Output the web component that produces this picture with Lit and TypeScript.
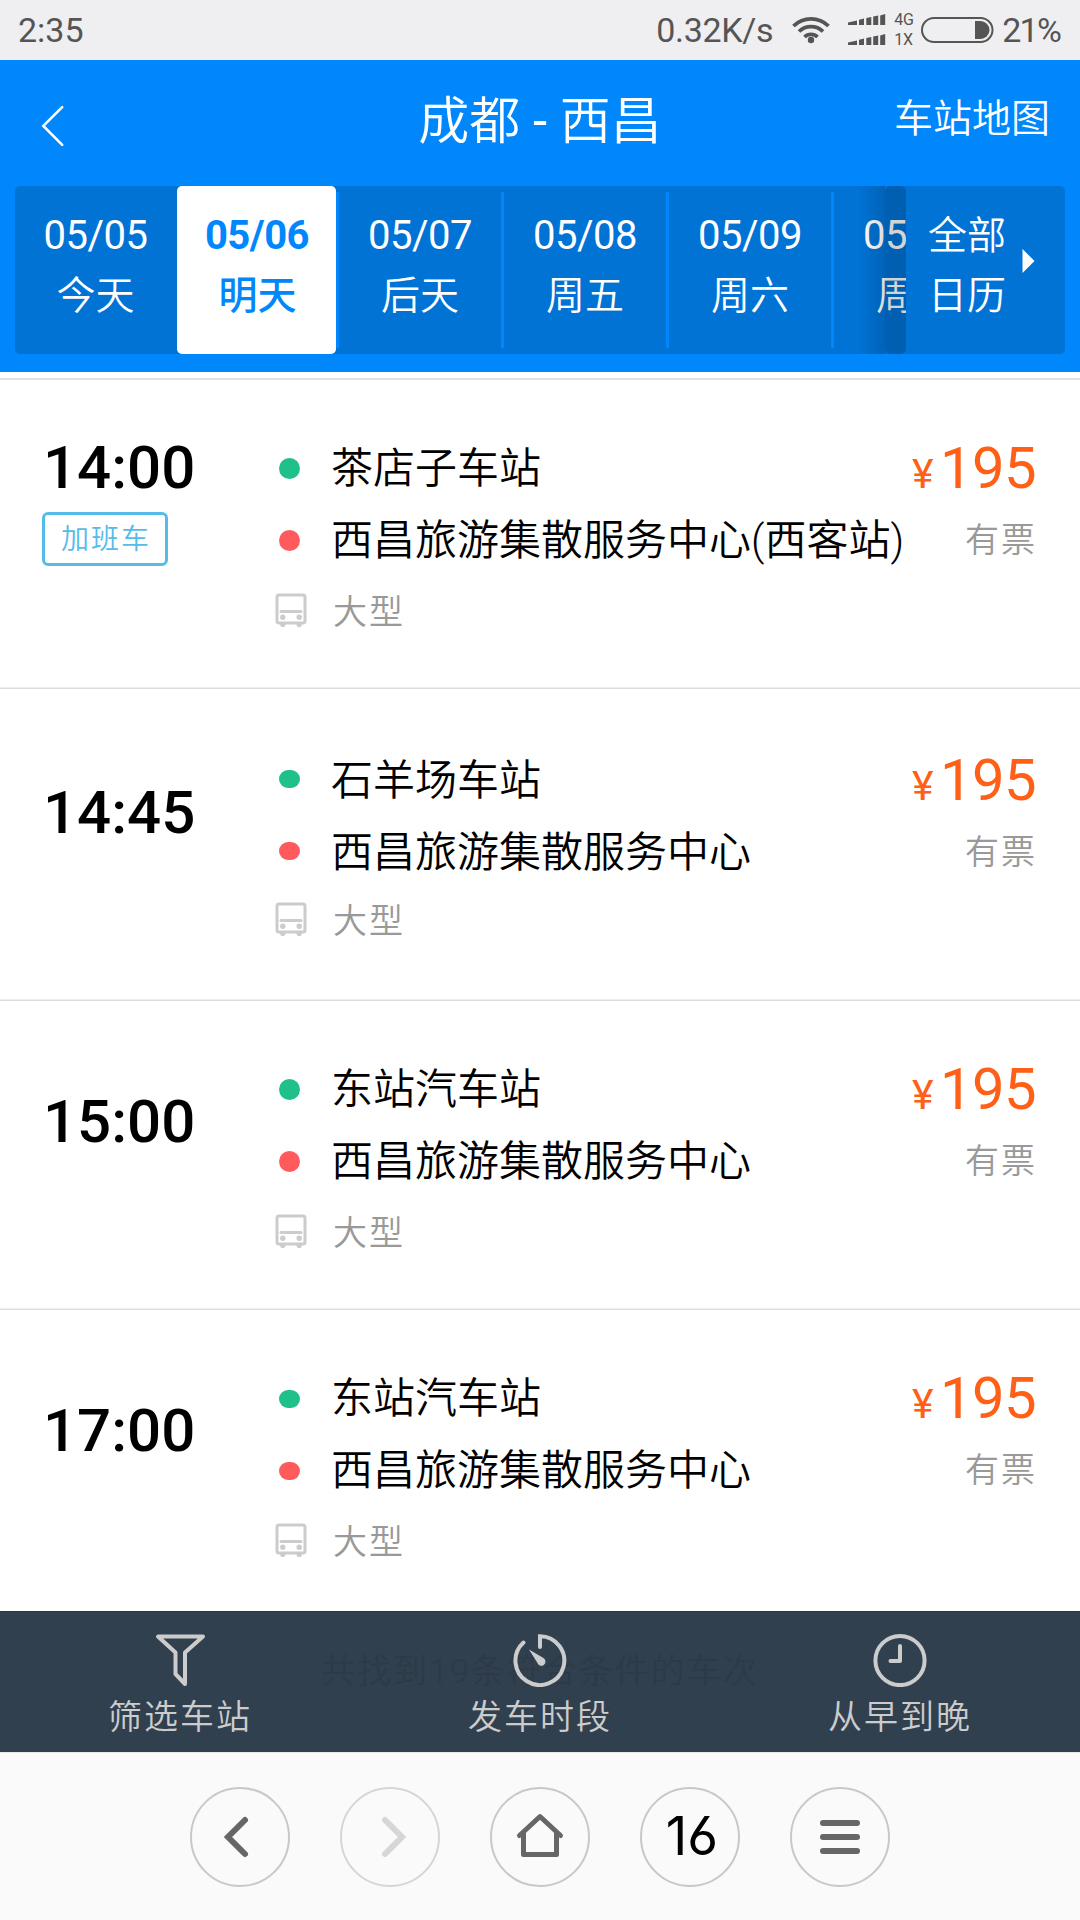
import { LitElement, html, css, svg, nothing } from "lit";
import { customElement, property } from "lit/decorators.js";
import { classMap } from "lit/directives/class-map.js";

interface Day {
  date: string;
  label: string;
  active?: boolean;
}

interface Trip {
  time: string;
  tag?: string;
  from: string;
  to: string;
  vehicle: string;
  price: string;
  stock: string;
  tall?: boolean;
  flatDots?: boolean;
}

const DAYS: Day[] = [
  { date: "05/05", label: "今天" },
  { date: "05/06", label: "明天", active: true },
  { date: "05/07", label: "后天" },
  { date: "05/08", label: "周五" },
  { date: "05/09", label: "周六" },
  { date: "05/10", label: "周日" },
];

const TRIPS: Trip[] = [
  { time: "14:00", tag: "加班车", from: "茶店子车站", to: "西昌旅游集散服务中心(西客站)", vehicle: "大型", price: "195", stock: "有票" },
  { time: "14:45", from: "石羊场车站", to: "西昌旅游集散服务中心", vehicle: "大型", price: "195", stock: "有票", tall: true, flatDots: true },
  { time: "15:00", from: "东站汽车站", to: "西昌旅游集散服务中心", vehicle: "大型", price: "195", stock: "有票" },
  { time: "17:00", from: "东站汽车站", to: "西昌旅游集散服务中心", vehicle: "大型", price: "195", stock: "有票", flatDots: true },
];

const shared = css`
  *, *::before, *::after { box-sizing: border-box; }
  :host {
    display: block;
    font-family: Roboto, "Noto Sans CJK SC", sans-serif;
    font-weight: 400;
  }
  svg { display: block; flex: none; }
`;

@customElement("status-bar")
class StatusBar extends LitElement {
  static styles = [shared, css`
    .bar { display: flex; align-items: center; height: 60px; padding: 0 20px 0 18px; background: #efeff1; color: #555; font-size: 34px; line-height: 60px; }
    .speed { margin-left: auto; margin-right: 19px; letter-spacing: -0.3px; }
    .signals { margin-left: 18px; }
    .net { margin: 0 5px 0 8px; width: 22px; font-size: 16px; line-height: 20px; letter-spacing: -0.3px; }
    .pct { margin-left: 8px; letter-spacing: -1.8px; }
  `];

  render() {
    const bars = (y: number) => svg`
      <path d="M0 ${y + 11}v-2.4l9 -2.2v4.6z M11 ${y + 11}v-5.2l5 -1.3v6.5z M18.3 ${y + 11}v-7l5 -1v8z M25.2 ${y + 11}v-8.4l5 -1.2v9.6z M32.2 ${y + 11}v-9.6l5 -1.4v11z"/>`;
    return html`
      <div class="bar">
        <span>2:35</span>
        <span class="speed">0.32K/s</span>
        <svg width="38" height="60" viewBox="0 0 38 60" fill="none" stroke="#555" stroke-width="3.8">
          <path d="M1.5 26a25 25 0 0 1 35 0"/>
          <path d="M7 31.5a17.3 17.3 0 0 1 24 0"/>
          <path d="M12.5 37a9.4 9.4 0 0 1 13 0"/>
          <circle cx="19" cy="40" r="3.2" fill="#555" stroke="none"/>
        </svg>
        <svg class="signals" width="38" height="60" viewBox="0 0 38 60" fill="#555">${bars(14)}${bars(34)}</svg>
        <div class="net"><div>4G</div><div>1X</div></div>
        <svg width="73" height="60" viewBox="0 0 73 60">
          <rect x="1" y="18" width="70.5" height="24" rx="12" fill="none" stroke="#555" stroke-width="2"/>
          <path d="M54 21h5.5a9 9 0 0 1 0 18H54z" fill="#555"/>
        </svg>
        <span class="pct">21%</span>
      </div>`;
  }
}

@customElement("date-strip")
class DateStrip extends LitElement {
  @property({ attribute: false }) days: Day[] = [];

  static styles = [shared, css`
    .strip { position: relative; display: flex; height: 168px; margin: 0 15px; border-radius: 5px; background: #0073d5; overflow: hidden; color: #fff; }
    .days { display: flex; width: 891px; overflow: hidden; }
    .day { flex: none; display: flex; flex-direction: column; align-items: center; width: 165px; padding: 20px 0 0 3px; position: relative; text-align: center; }
    .day:first-child { width: 162px; padding-left: 0; padding-right: 1px; }
    .day::before { content: ""; position: absolute; left: 0; top: 6px; bottom: 6px; width: 3px; background: #0087fb; }
    .day:first-child::before, .active::before { display: none; }
    .day.active { width: 159px; padding-left: 1px; border-radius: 5px; background: #fff; color: #0087fb; font-weight: 700; }
    .active .label { font-weight: 500; padding-left: 1px; }
    .date { font-size: 40px; line-height: 60px; letter-spacing: -0.5px; }
    .label { font-size: 39px; line-height: 60px; font-weight: 350; }
    .shade { position: absolute; right: 159px; top: 0; width: 48px; height: 168px; display: flex; }
    .fade { width: 27px; background: linear-gradient(to right, rgba(0,0,0,0), rgba(0,0,0,.14)); }
    .edge { width: 21px; border-radius: 5px; background: rgba(0,0,0,.17); }
    .all { display: flex; flex: 1; align-items: flex-start; padding: 20px 0 0 22px; font-size: 39px; line-height: 60px; font-weight: 350; }
    .arrow { margin: 43px 0 0 16px; }
  `];

  render() {
    return html`
      <div class="strip">
        <div class="days">
          ${this.days.map((d) => html`
            <div class=${classMap({ day: true, active: !!d.active })}>
              <div class="date">${d.date}</div>
              <div class="label">${d.label}</div>
            </div>`)}
        </div>
        <div class="shade"><div class="fade"></div><div class="edge"></div></div>
        <div class="all">
          <div><div>全部</div><div>日历</div></div>
          <svg class="arrow" width="13" height="24" viewBox="0 0 13 24"><path d="M0.5 0L12.5 12L0.5 24z" fill="#fff"/></svg>
        </div>
      </div>`;
  }
}

@customElement("trip-row")
class TripRow extends LitElement {
  @property({ attribute: false }) trip!: Trip;

  static styles = [shared, css`
    .row { display: flex; height: 309px; padding: 52px 44px 0 42px; border-bottom: 1px solid #dcdcdc; box-shadow: inset 0 -1px #efefef; color: #000; }
    .tall { height: 312px; padding-top: 55px; }
    .flat .dot { height: 18px; margin-top: 2px; }
    .tall .dot { margin-top: -2px; }
    .tall .vehicle { height: 64px; }
    .when { display: flex; flex-direction: column; align-items: flex-start; justify-content: center; width: 233px; height: 138px; }
    .tagged { justify-content: flex-start; height: auto; }
    .time { font-size: 60px; line-height: 72px; font-weight: 500; padding-left: 1px; }
    .tag { margin-top: 8px; width: 126px; height: 54px; border: 3px solid #55bcea; border-radius: 6px; color: #55bcea; font-size: 28px; line-height: 50px; text-align: center; letter-spacing: 2px; padding-left: 2px; font-weight: 350; }
    .route { flex: 1; }
    .stop { display: flex; align-items: center; height: 72px; font-size: 42px; line-height: 74px; white-space: nowrap; }
    .dot { width: 21px; height: 21px; margin: 0 31px 0 4px; border-radius: 10.5px; background: #1fc08a; }
    .dot.end { background: #ff5a5c; }
    .name { font-weight: 350; padding-top: 2px; }
    .vehicle { display: flex; align-items: center; height: 70px; color: #999; font-size: 34px; letter-spacing: 2px; line-height: 74px; font-weight: 350; }
    .vehicle svg { margin-right: 26px; }
    .vehicle span { padding-top: 1px; }
    .fare { display: flex; flex-direction: column; align-items: flex-end; }
    .price { display: flex; align-items: baseline; height: 72px; color: #ff5f16; font-size: 58px; line-height: 72px; letter-spacing: -0.6px; }
    .yen { font-size: 41px; margin-right: 7px; }
    .stock { margin-right: -1px; color: #999; font-size: 34px; letter-spacing: 2px; line-height: 72px; font-weight: 350; }
  `];

  render() {
    const t = this.trip;
    return html`
      <div class=${classMap({ row: true, tall: !!t.tall, flat: !!t.flatDots })}>
        <div class=${classMap({ when: true, tagged: !!t.tag })}>
          <div class="time">${t.time}</div>
          ${t.tag ? html`<div class="tag">${t.tag}</div>` : nothing}
        </div>
        <div class="route">
          <div class="stop"><i class="dot"></i><span class="name">${t.from}</span></div>
          <div class="stop"><i class="dot end"></i><span class="name">${t.to}</span></div>
          <div class="vehicle">
            <svg width="32" height="36" viewBox="0 0 32 36">
              <rect x="2" y="2" width="28" height="28" rx="2" fill="none" stroke="#ccc" stroke-width="3"/>
              <path d="M6 18.5h20" stroke="#ccc" stroke-width="3" stroke-linecap="round"/>
              <g fill="#ccc"><circle cx="7.8" cy="24.3" r="2.7"/><circle cx="24.2" cy="24.3" r="2.7"/><circle cx="7.8" cy="31.5" r="2.6"/><circle cx="24.2" cy="31.5" r="2.6"/></g>
            </svg>
            <span>${t.vehicle}</span>
          </div>
        </div>
        <div class="fare">
          <div class="price"><span class="yen">¥</span><span>${t.price}</span></div>
          <div class="stock">${t.stock}</div>
        </div>
      </div>`;
  }
}

const ICONS = {
  filter: svg`<path d="M5 3.5H50L32 19.5V51L22.5 41V19.5Z" stroke-linejoin="round"/>`,
  timer: svg`<path d="M27 14V3.2A24.4 24.4 0 1 1 10.5 9.5" stroke-linecap="round"/><path d="M16 16.5L30.5 25A4.2 4.2 0 1 1 24.2 29.6Z" fill="#ccc" stroke="none"/>`,
  clock: svg`<circle cx="27" cy="27.5" r="24.6"/><path d="M27 13V28H17.5" stroke-linecap="round" stroke-linejoin="round"/>`,
};

@customElement("filter-bar")
class FilterBar extends LitElement {
  static styles = [shared, css`
    .bar { position: relative; display: grid; grid-template-columns: repeat(3, 1fr); height: 141px; border-top: 1px solid #293643; background: #31404f; color: #ccc; }
    .item { position: relative; display: flex; flex-direction: column; align-items: center; padding-top: 21px; }
    .item span { margin-top: 2px; font-size: 34px; line-height: 56px; letter-spacing: 2px; font-weight: 350; }
    .found { position: absolute; left: 0; right: 0; top: 34px; text-align: center; color: #2d3a48; font-size: 34px; letter-spacing: 2px; line-height: 50px; font-weight: 350; }
  `];

  item(icon: unknown, label: string) {
    return html`
      <div class="item">
        <svg width="54" height="54" viewBox="0 0 54 54" fill="none" stroke="#ccc" stroke-width="4">${icon}</svg>
        <span>${label}</span>
      </div>`;
  }

  render() {
    return html`
      <div class="bar">
        <div class="found">共找到19条符合条件的车次</div>
        ${this.item(ICONS.filter, "筛选车站")}
        ${this.item(ICONS.timer, "发车时段")}
        ${this.item(ICONS.clock, "从早到晚")}
      </div>`;
  }
}

@customElement("browser-bar")
class BrowserBar extends LitElement {
  static styles = [shared, css`
    .bar { display: flex; justify-content: center; align-items: flex-start; gap: 50px; height: 168px; padding-top: 34px; background: #fafafa; border-top: 1px solid #e6e9e4; }
    .btn { display: flex; align-items: center; justify-content: center; width: 100px; height: 100px; border: 2px solid #c8c8c8; border-radius: 50%; }
    .off { border-color: #d6d6d6; }
    .count { font-family: Inter, sans-serif; font-weight: 370; font-size: 53px; line-height: 94px; height: 96px; padding-left: 4px; color: #000; font-feature-settings: "cv03", "cv04"; }
  `];

  render() {
    const icon = (shape: unknown, color = "#666") => html`
      <svg width="96" height="96" viewBox="2 2 96 96" fill="none" stroke=${color} stroke-width="6" stroke-linecap="round">${shape}</svg>`;
    return html`
      <div class="bar">
        <div class="btn">${icon(svg`<path d="M55 33L38 50L55 67"/>`)}</div>
        <div class="btn off">${icon(svg`<path d="M45 33L62 50L45 67"/>`, "#d6d6d6")}</div>
        <div class="btn">${icon(svg`<path d="M29.5 48.5L50 29.5L70.5 48.5M33.5 46V67.5H66.5V46" stroke-width="5" stroke-linejoin="round"/>`)}</div>
        <div class="btn"><span class="count">16</span></div>
        <div class="btn">${icon(svg`<path d="M33 36H67M33 50H67M33 64H67"/>`)}</div>
      </div>`;
  }
}

@customElement("app-root")
class AppRoot extends LitElement {
  static styles = [shared, css`
    :host { width: 1080px; height: 1920px; overflow: hidden; }
    .page { display: flex; flex-direction: column; height: 1920px; background: #fff; }
    .head { height: 312px; flex: none; background: #0087fb; color: #fff; }
    .title-row { display: grid; grid-template-columns: 1fr auto 1fr; align-items: center; height: 126px; padding: 0 30px 0 38px; }
    .title { font-size: 51px; line-height: 122px; padding: 0 8px 2px 0; font-weight: 350; }
    .dash { font-weight: 400; }
    .back { padding-top: 4px; }
    .map { justify-self: end; font-size: 39px; line-height: 118px; padding-bottom: 8px; font-weight: 350; }
    .list { flex: 1; min-height: 0; overflow: hidden; margin-top: 6px; border-top: 2px solid #e2e2e2; }
  `];

  render() {
    return html`
      <div class="page">
        <status-bar></status-bar>
        <div class="head">
          <div class="title-row">
            <svg class="back" width="30" height="49" viewBox="0 0 30 49" fill="none" stroke="#fff" stroke-width="2.8" stroke-linecap="round"><path d="M25 4.5L4.5 25L25 45.5"/></svg>
            <div class="title">成都<span class="dash"> - </span>西昌</div>
            <div class="map">车站地图</div>
          </div>
          <date-strip .days=${DAYS}></date-strip>
        </div>
        <div class="list">${TRIPS.map((t) => html`<trip-row .trip=${t}></trip-row>`)}</div>
        <filter-bar></filter-bar>
        <browser-bar></browser-bar>
      </div>`;
  }
}
